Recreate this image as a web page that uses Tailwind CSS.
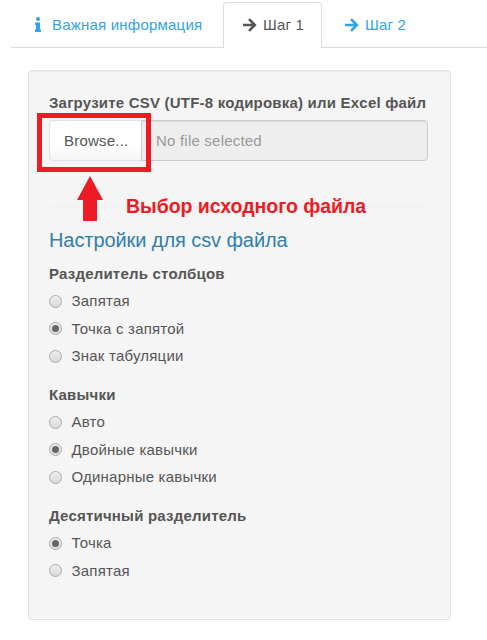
<!DOCTYPE html>
<html lang="ru"><head><meta charset="utf-8"><title>CSV</title>
<script src="https://cdn.jsdelivr.net/npm/@tailwindcss/browser@4"></script></head>
<body class="bg-white text-[#555] text-[15px] leading-5 tracking-[0.21px] font-['Liberation_Sans',Arial,sans-serif] w-[487px] h-[640px] overflow-hidden">
<nav class="ml-[11px] mt-[2px] h-[46px] flex border-b border-[#ddd] whitespace-nowrap text-[#2fa4e7]">
  <a class="w-[212px] pl-[24px] flex items-center"><svg class="w-[6px] h-[15px] shrink-0 mr-[11px]" viewBox="0 0 6 15" fill="currentColor"><circle cx="3" cy="2" r="2"/><path d="M0 5.500h5V12.500H6V15H0v-2.500h1V8H0z"/></svg><span>Важная информация</span></a>
  <a class="w-[99px] h-[46px] shrink-0 border border-b-0 border-[#ddd] rounded-t-[4px] bg-white text-[#555] pl-[19px] pb-px flex items-center"><svg class="w-[14px] h-[14px] shrink-0 mr-[6px]" viewBox="0 0 14 14" fill="none" stroke="currentColor" stroke-width="2.6"><path d="M0 7h12M6 1.200L11.800 7l-5.800 5.800"/></svg><span>Шаг 1</span></a>
  <a class="pl-[23px] flex items-center"><svg class="w-[14px] h-[14px] shrink-0 mr-[6px]" viewBox="0 0 14 14" fill="none" stroke="currentColor" stroke-width="2.6"><path d="M0 7h12M6 1.200L11.800 7l-5.800 5.800"/></svg><span>Шаг 2</span></a>
</nav>
<main class="relative ml-[28px] mt-[22px] w-[423px] h-[550px] border border-[#e3e3e3] rounded-[4px] bg-[#f5f5f5] shadow-[inset_0_1px_1px_rgba(0,0,0,0.05)] pl-[20px] pr-[22px] pt-[22px] whitespace-nowrap">
  <div class="font-bold"><span>Загрузите CSV (UTF-8 кодировка) или Excel файл</span></div>
  <div class="mt-[7px] h-[41px] w-[379px] flex">
    <button class="w-[92px] border border-r-0 border-[#e1e1e1] rounded-l-[4px] bg-linear-to-b from-white from-60% to-[#f5f5f5] text-left pl-[14px] tracking-[0.21px]"><span>Browse...</span></button>
    <div class="flex-1 border border-[#ccc] rounded-r-[4px] bg-[#eee] shadow-[inset_0_1px_1px_rgba(0,0,0,0.075)] text-[#999] flex items-center pl-[14px]"><span>No file selected</span></div>
  </div>
  <hr class="mt-[45px] w-[379px] border-[#eee]">
  <h4 class="mt-[21px] text-[20px] leading-6 tracking-[-0.08px] text-[#317eac]"><span>Настройки для csv файла</span></h4>
  <section class="mt-[12px] h-[121px]"><div class="font-bold mb-[3.5px]"><span>Разделитель столбцов</span></div>
    <label class="h-[27.5px] flex items-center"><i class="size-[13px] rounded-full border border-[#aaa] bg-linear-to-b from-[#eee] to-[#d9d9d9] mr-[9.5px]"></i><span>Запятая</span></label>
    <label class="h-[27.5px] flex items-center"><i class="size-[13px] rounded-full border border-[#aaa] bg-linear-to-b from-[#eee] to-[#ddd] mr-[9.5px] flex items-center justify-center"><b class="size-[7px] rounded-full bg-[#666]"></b></i><span>Точка с запятой</span></label>
    <label class="h-[27.5px] flex items-center"><i class="size-[13px] rounded-full border border-[#aaa] bg-linear-to-b from-[#eee] to-[#d9d9d9] mr-[9.5px]"></i><span>Знак табуляции</span></label>
  </section>
  <section class="h-[121px]"><div class="font-bold mb-[3.5px]"><span>Кавычки</span></div>
    <label class="h-[27.5px] flex items-center"><i class="size-[13px] rounded-full border border-[#aaa] bg-linear-to-b from-[#eee] to-[#d9d9d9] mr-[9.5px]"></i><span>Авто</span></label>
    <label class="h-[27.5px] flex items-center"><i class="size-[13px] rounded-full border border-[#aaa] bg-linear-to-b from-[#eee] to-[#ddd] mr-[9.5px] flex items-center justify-center"><b class="size-[7px] rounded-full bg-[#666]"></b></i><span>Двойные кавычки</span></label>
    <label class="h-[27.5px] flex items-center"><i class="size-[13px] rounded-full border border-[#aaa] bg-linear-to-b from-[#eee] to-[#d9d9d9] mr-[9.5px]"></i><span>Одинарные кавычки</span></label>
  </section>
  <section><div class="font-bold mb-[3.5px]"><span>Десятичный разделитель</span></div>
    <label class="h-[27.5px] flex items-center"><i class="size-[13px] rounded-full border border-[#aaa] bg-linear-to-b from-[#eee] to-[#ddd] mr-[9.5px] flex items-center justify-center"><b class="size-[7px] rounded-full bg-[#666]"></b></i><span>Точка</span></label>
    <label class="h-[27.5px] flex items-center"><i class="size-[13px] rounded-full border border-[#aaa] bg-linear-to-b from-[#eee] to-[#d9d9d9] mr-[9.5px]"></i><span>Запятая</span></label>
  </section>
  <!-- Callout over the file picker -->
  <div class="absolute left-[8px] top-[42px] w-[114px] h-[59px] border-[5px] border-[#ed1c24]"></div>
  <svg class="absolute left-[48px] top-[105px] w-[26px] h-[45px]" viewBox="0 0 26 45" fill="#ed1c24"><path d="M13 0L26 24H20V45H6V24H0z"/></svg>
  <div class="absolute left-[97px] top-[123px] text-[19.5px] leading-6 tracking-[-0.04px] font-bold text-[#ed1c24]"><span>Выбор исходного файла</span></div>
</main>
</body></html>
